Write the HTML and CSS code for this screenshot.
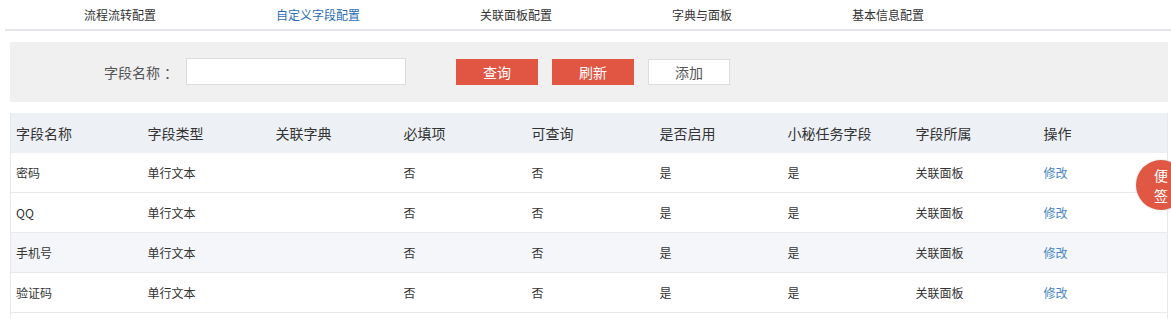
FILE: index.html
```html
<!DOCTYPE html>
<html lang="zh-CN">
<head>
  <meta charset="UTF-8">
  <title>自定义字段配置</title>
  <link rel="stylesheet" href="styles.css">
</head>
<body>
  <!-- 顶部标签页 -->
  <div class="tabs">
    <a class="tab">流程流转配置</a>
    <a class="tab active">自定义字段配置</a>
    <a class="tab">关联面板配置</a>
    <a class="tab">字典与面板</a>
    <a class="tab">基本信息配置</a>
  </div>

  <!-- 查询条件 -->
  <div class="search-panel">
    <label class="search-label" for="fieldName">字段名称<span class="colon">：</span></label>
    <input type="text" id="fieldName" class="search-input">
    <button class="btn btn-red first">查询</button>
    <button class="btn btn-red">刷新</button>
    <button class="btn btn-white">添加</button>
  </div>

  <!-- 字段列表 -->
  <table class="field-table">
    <colgroup>
      <col class="c-first">
      <col class="c"><col class="c"><col class="c"><col class="c">
      <col class="c"><col class="c"><col class="c"><col>
    </colgroup>
    <thead>
      <tr>
        <th>字段名称</th>
        <th>字段类型</th>
        <th>关联字典</th>
        <th>必填项</th>
        <th>可查询</th>
        <th>是否启用</th>
        <th>小秘任务字段</th>
        <th>字段所属</th>
        <th>操作</th>
      </tr>
    </thead>
    <tbody>
      <tr>
        <td>密码</td><td>单行文本</td><td></td><td>否</td><td>否</td>
        <td>是</td><td>是</td><td>关联面板</td><td><a class="edit-link">修改</a></td>
      </tr>
      <tr>
        <td>QQ</td><td>单行文本</td><td></td><td>否</td><td>否</td>
        <td>是</td><td>是</td><td>关联面板</td><td><a class="edit-link">修改</a></td>
      </tr>
      <tr class="striped">
        <td>手机号</td><td>单行文本</td><td></td><td>否</td><td>否</td>
        <td>是</td><td>是</td><td>关联面板</td><td><a class="edit-link">修改</a></td>
      </tr>
      <tr>
        <td>验证码</td><td>单行文本</td><td></td><td>否</td><td>否</td>
        <td>是</td><td>是</td><td>关联面板</td><td><a class="edit-link">修改</a></td>
      </tr>
      <tr>
        <td>&nbsp;</td><td></td><td></td><td></td><td></td>
        <td></td><td></td><td></td><td></td>
      </tr>
    </tbody>
  </table>

  <!-- 便签悬浮按钮 -->
  <div class="note-badge">便<br>签</div>
</body>
</html>
```

FILE: styles.css
```css
html, body {
  overflow: hidden;
}
body {
  margin: 0;
  padding: 0;
  font-family: "Noto Sans CJK SC", "Liberation Sans", sans-serif;
  color: #333;
  background: #fff;
  position: relative;
  height: 319px;
}
.tabs {
  display: flex;
  height: 29px;
  margin-left: 5px;
  padding-left: 19px;
  border-bottom: 2px solid #e4e6ea;
}
.tab {
  padding: 0 60px;
  font-size: 12px;
  line-height: 29px;
  color: #333;
  cursor: pointer;
}
.tab.active {
  color: #2b6cb5;
}
.search-panel {
  display: flex;
  align-items: center;
  height: 60px;
  margin: 11px 3px 0 10px;
  padding-left: 94px;
  background-color: #f0f0f0;
}
.search-label {
  font-size: 14px;
  color: #555;
  margin-right: 8px;
}
.colon {
  padding-left: 4px;
}
.search-input {
  width: 220px;
  height: 27px;
  box-sizing: border-box;
  margin-top: -2px;
  border: 1px solid #dcdcdc;
  background: #fff;
  outline: none;
}
.btn {
  width: 82px;
  height: 26px;
  margin-left: 14px;
  font-family: inherit;
  font-size: 14px;
  border: none;
  cursor: pointer;
  padding: 0;
}
.btn.first {
  margin-left: 50px;
}
.btn-red {
  background-color: #e15543;
  color: #fff;
}
.btn-white {
  background-color: #fff;
  color: #555;
  border: 1px solid #dcdcdc;
}
.field-table {
  width: 1158px;
  margin: 11px 0 0 10px;
  border-collapse: collapse;
  table-layout: fixed;
  border-left: 1px solid #e6e8eb;
  border-right: 1px solid #e6e8eb;
}
.c-first {
  width: 132px;
}
.c {
  width: 128px;
}
th, td {
  padding: 0 0 0 5px;
  text-align: left;
}
th {
  height: 40px;
  background-color: #edf1f6;
  font-size: 14px;
  font-weight: normal;
  color: #333;
}
td {
  height: 39px;
  font-size: 12px;
  color: #333;
  border-bottom: 1px solid #e8eaed;
}
tr.striped td {
  background-color: #f4f6f9;
}
.edit-link {
  color: #4a86c5;
  cursor: pointer;
}
.note-badge {
  position: absolute;
  left: 1136px;
  top: 160px;
  width: 50px;
  height: 50px;
  border-radius: 50%;
  background-color: #e05744;
  color: #fff;
  font-size: 14px;
  line-height: 20px;
  box-sizing: border-box;
  padding: 5px 0 0 18px;
  box-shadow: 0 0 2px rgba(0, 0, 0, 0.2);
}
```
